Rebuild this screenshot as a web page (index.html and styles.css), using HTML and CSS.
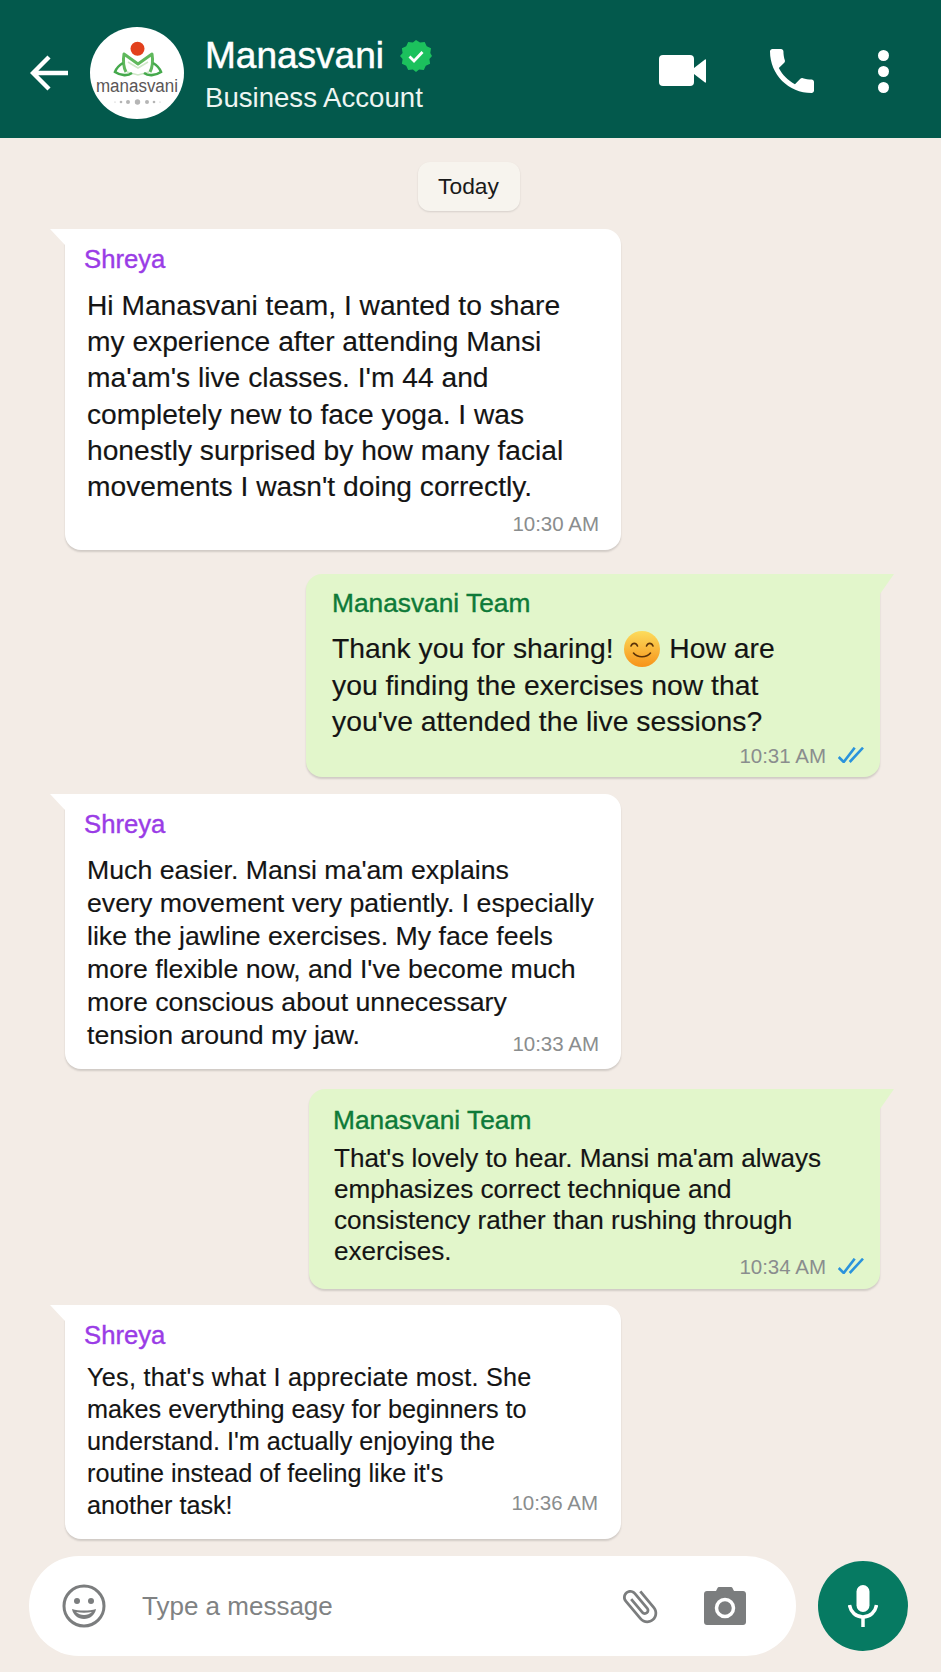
FILE: index.html
```html
<!DOCTYPE html>
<html lang="en">
<head>
    <meta charset="UTF-8">
    <title>Manasvani</title>
    <link rel="stylesheet" href="styles.css">
</head>
<body>
<div class="phone">
    <header class="topbar">
        <svg class="back_icon" viewBox="0 0 40 38"><path d="M38 19H4M19 3L3 19l16 16" fill="none" stroke="#fff" stroke-width="4.4"/></svg>
        <svg class="avatar" viewBox="0 0 94 92">
            <ellipse cx="47" cy="46" rx="47" ry="46" fill="#fff"/>
            <circle cx="47.500" cy="21.700" r="7" fill="#e2401c"/>
            <path d="M37 45l11 3 11-3M38 35l10 6 10-6" fill="none" stroke="#cfe8c8" stroke-width="1.600"/>
            <path d="M36 45c-3-6-3-12-2-18l14 10 14-10c1 6 1 12-2 18" fill="none" stroke="#5fb85c" stroke-width="3" stroke-linejoin="round"/>
            <path d="M33 36c-5 3-7 6-8 9 6 4 13 4 17 1M63 36c5 3 7 6 8 9-6 4-13 4-17 1" fill="none" stroke="#45a94c" stroke-width="2.600"/>
            <text x="47" y="65" class="avatar_text" text-anchor="middle" textLength="82" lengthAdjust="spacingAndGlyphs">manasvani</text>
            <g fill="#b5b5b5"><circle cx="47.500" cy="75" r="2.700"/><circle cx="38" cy="75" r="2"/><circle cx="57" cy="75" r="2"/><circle cx="31" cy="75" r="1.300"/><circle cx="64" cy="75" r="1.300"/><circle cx="25" cy="75" r=".6"/><circle cx="70" cy="75" r=".6"/></g>
        </svg>
        <div class="contact">
            <div class="contact_name">Manasvani
                <svg class="verified" viewBox="0 0 34 34"><path d="M17 1l4 2.600 4.700-.7 2 4.300 4.300 2-.7 4.700L33 17l-2.600 3.100.7 4.700-4.300 2-2 4.300-4.700-.7L17 33l-3.100-2.600-4.700.7-2-4.300-4.300-2 .7-4.700L1 17l2.600-3.100-.7-4.700 4.300-2 2-4.300 4.700.7z" fill="#1cc15d"/><path d="M10.500 17.500l4.500 4.500 8.500-9" fill="none" stroke="#fff" stroke-width="2.800"/></svg>
            </div>
            <div class="contact_sub">Business Account</div>
        </div>
        <div class="top_actions">
            <svg class="video_icon" viewBox="0 0 47 32"><rect x="0" y="0" width="35" height="31" rx="4" fill="#fff"/><path d="M35 13L46 4.500c.5-.4 1 0 1 .6v21.800c0 .6-.5 1-1 .6L35 19z" fill="#fff"/></svg>
            <svg class="call_icon" viewBox="3 3 18 18"><path d="M6.620 10.790c1.440 2.830 3.760 5.140 6.590 6.590l2.200-2.200c.27-.27.67-.36 1.020-.24 1.120.37 2.330.57 3.570.57.550 0 1 .45 1 1V20c0 .55-.45 1-1 1-9.390 0-17-7.610-17-17 0-.55.45-1 1-1h3.500c.55 0 1 .45 1 1 0 1.250.2 2.450.57 3.570.11.350.03.740-.25 1.020l-2.200 2.200z" fill="#fff"/></svg>
            <div class="dots"><span></span><span></span><span></span></div>
        </div>
    </header>

    <main class="chat">
        <div class="day_row"><span class="day_label">Today</span></div>

        <div class="msg msg_in msg_first">
            <div class="sender sender_in">Shreya</div>
            <div class="text text_lg">Hi Manasvani team, I wanted to share<br>my experience after attending Mansi<br>ma'am's live classes. I'm 44 and<br>completely new to face yoga. I was<br>honestly surprised by how many facial<br>movements I wasn't doing correctly.</div>
            <div class="meta meta_first"><span class="time">10:30 AM</span></div>
        </div>

        <div class="msg msg_out msg_second">
            <div class="sender sender_out">Manasvani Team</div>
            <div class="text text_lg">Thank you for sharing!
                <svg class="emoji" viewBox="0 0 36 36">
                    <defs><linearGradient id="smile" x1="0" y1="0" x2="0" y2="1"><stop offset="0" stop-color="#fcdc5c"/><stop offset="1" stop-color="#f7931a"/></linearGradient></defs>
                    <circle cx="18" cy="18" r="18" fill="url(#smile)"/>
                    <path d="M7 15c1.500-3.500 5-3.500 6.500 0M22.500 15c1.500-3.500 5-3.500 6.500 0M9.500 22c4 5 13 5 17 0" fill="none" stroke="#5a3208" stroke-width="1.600" stroke-linecap="round"/>
                </svg>
                How are<br>you finding the exercises now that<br>you've attended the live sessions?</div>
            <div class="meta meta_second"><span class="time">10:31 AM</span>
                <svg class="ticks" viewBox="0 0 26 16"><path d="M.7 10l5 5L16.700.7M11.700 15L25 .7" fill="none" stroke="#2a93dc" stroke-width="2.600"/></svg>
            </div>
        </div>

        <div class="msg msg_in msg_third">
            <div class="sender sender_in">Shreya</div>
            <div class="text text_md">Much easier. Mansi ma'am explains<br>every movement very patiently. I especially<br>like the jawline exercises. My face feels<br>more flexible now, and I've become much<br>more conscious about unnecessary<br>tension around my jaw.</div>
            <div class="meta meta_third"><span class="time">10:33 AM</span></div>
        </div>

        <div class="msg msg_out msg_fourth">
            <div class="sender sender_out">Manasvani Team</div>
            <div class="text text_sm">That's lovely to hear. Mansi ma'am always<br>emphasizes correct technique and<br>consistency rather than rushing through<br>exercises.</div>
            <div class="meta meta_fourth"><span class="time">10:34 AM</span>
                <svg class="ticks" viewBox="0 0 26 16"><path d="M.7 10l5 5L16.700.7M11.700 15L25 .7" fill="none" stroke="#2a93dc" stroke-width="2.600"/></svg>
            </div>
        </div>

        <div class="msg msg_in msg_fifth">
            <div class="sender sender_in">Shreya</div>
            <div class="text text_xs"><span class="line_wide">Yes, that's what I appreciate most. She</span><br>makes everything easy for beginners to<br>understand. I'm actually enjoying the<br>routine instead of feeling like it's<br>another task!</div>
            <div class="meta meta_fifth"><span class="time">10:36 AM</span></div>
        </div>
    </main>

    <footer class="composer">
        <div class="input_box">
            <svg class="smiley" viewBox="0 0 44 44"><circle cx="22" cy="22" r="20" fill="none" stroke="#7b7d7e" stroke-width="3"/><circle cx="15" cy="17" r="3" fill="#7b7d7e"/><circle cx="29" cy="17" r="3" fill="#7b7d7e"/><path d="M10 25c7 2 17 2 24 0-1 6-6 10-12 10s-11-4-12-10z" fill="#7b7d7e"/><path d="M14 28c5 1 11 1 16 0-2 2-5 3-8 3s-6-1-8-3z" fill="#fff"/></svg>
            <span class="placeholder">Type a message</span>
            <svg class="clip" viewBox="0 0 24 24"><path d="M16.500 6v11.500c0 2.210-1.790 4-4 4s-4-1.790-4-4V5c0-1.380 1.120-2.500 2.500-2.500s2.500 1.120 2.500 2.500v10.500c0 .55-.45 1-1 1s-1-.45-1-1V6H10v9.500c0 1.380 1.120 2.500 2.500 2.500s2.500-1.120 2.500-2.500V5c0-2.210-1.790-4-4-4S7 2.790 7 5v12.500c0 3.040 2.460 5.500 5.500 5.500s5.500-2.460 5.500-5.500V6h-1.500z" fill="#7b7d7e" transform="rotate(-40 12 12)"/></svg>
            <svg class="camera" viewBox="0 0 42 38"><path d="M3 4h9l1.500-3c.3-.6.8-1 1.500-1h12c.7 0 1.200.4 1.500 1L30 4h9c1.700 0 3 1.300 3 3v28c0 1.700-1.300 3-3 3H3c-1.700 0-3-1.300-3-3V7c0-1.700 1.300-3 3-3z" fill="#7b7d7e"/><circle cx="21" cy="21" r="8.500" fill="none" stroke="#fff" stroke-width="3.500"/></svg>
        </div>
        <div class="mic_btn">
            <svg class="mic" viewBox="0 0 30 42"><rect x="8.500" y="0" width="13" height="27" rx="6.500" fill="#fff"/><path d="M1.500 20c1 7 6.500 12 13.500 12s12.500-5 13.500-12" fill="none" stroke="#fff" stroke-width="3.500"/><path d="M15 31v11" stroke="#fff" stroke-width="3.500"/></svg>
        </div>
    </footer>
</div>
</body>
</html>
```

FILE: styles.css
```css
body{
    margin: 0;
    background: #f3ece6;
    font-family: "Liberation Sans", Arial, sans-serif;
}
.phone{
    width: 941px;
    height: 1672px;
    overflow: hidden;
    display: flex;
    flex-direction: column;
    background: #f3ece6;
}

/* top bar */
.topbar{
    height: 138px;
    flex: none;
    background: #03594c;
    display: flex;
    align-items: center;
    padding-left: 30px;
    color: #fff;
}
.back_icon{
    width: 40px;
    height: 38px;
    margin-top: 7px;
}
.avatar{
    width: 94px;
    height: 92px;
    margin-left: 20px;
    margin-top: 8px;
}
.avatar_text{
    font-size: 18px;
    fill: #5b5657;
    font-family: "Liberation Sans", Arial, sans-serif;
}
.contact{
    margin-left: 21px;
    margin-top: 10px;
}
.contact_name{
    font-size: 37px;
    line-height: 44px;
    -webkit-text-stroke: .5px #fff;
    display: flex;
    align-items: center;
    gap: 15px;
}
.verified{
    width: 34px;
    height: 34px;
}
.contact_sub{
    font-size: 27.600px;
    line-height: 32px;
    margin-top: 4px;
    color: #eef5f2;
}
.top_actions{
    margin-left: auto;
    display: flex;
    align-items: center;
    padding-right: 52px;
    margin-top: 4px;
}
.video_icon{
    width: 47px;
    height: 32px;
}
.call_icon{
    width: 44px;
    height: 44px;
    margin-left: 64px;
}
.dots{
    display: flex;
    flex-direction: column;
    gap: 5px;
    margin-left: 64px;
}
.dots span{
    width: 11px;
    height: 11px;
    border-radius: 50%;
    background: #fff;
}

/* chat */
.chat{
    flex: 1;
    display: flex;
    flex-direction: column;
}
.day_row{
    display: flex;
    justify-content: center;
    margin-top: 24px;
    padding-right: 4px;
}
.day_label{
    width: 102px;
    height: 49px;
    line-height: 49px;
    text-align: center;
    font-size: 22.800px;
    color: #1a1a1a;
    background: #f7f4ee;
    border-radius: 12px;
    box-shadow: 0 1px 2px rgba(0,0,0,.12);
}
.msg{
    position: relative;
    box-sizing: border-box;
    border-radius: 0 16px 16px 16px;
    box-shadow: 0 2px 2px rgba(0,0,0,.14);
}
.msg_in{
    width: 556px;
    margin-left: 65px;
    background: #fff;
    padding-left: 19px;
}
.msg_out{
    background: #e2f6cb;
    border-radius: 16px 0 16px 16px;
    margin-left: auto;
    margin-right: 61px;
}
.msg_in::before{
    content: "";
    position: absolute;
    left: -15px;
    top: 0;
    border-top: 16px solid #fff;
    border-left: 15px solid transparent;
}
.msg_out::after{
    content: "";
    position: absolute;
    right: -14px;
    top: 0;
    border-top: 20px solid #e2f6cb;
    border-right: 14px solid transparent;
}
.msg_first{ margin-top: 18px; height: 321px; }
.msg_second{ margin-top: 24px; width: 574px; height: 203px; padding-left: 26px; }
.msg_third{ margin-top: 17px; height: 275px; }
.msg_fourth{ margin-top: 20px; width: 571px; height: 200px; padding-left: 24px; }
.msg_fifth{ margin-top: 16px; height: 234px; }

.sender{
    font-size: 26px;
    line-height: 30px;
    padding-top: 15px;
    -webkit-text-stroke: .4px;
}
.msg_in .sender{ font-size: 25.700px; }
.msg_out .sender{ font-size: 26.300px; }
.msg_second .sender{ padding-top: 14px; }
.msg_fourth .sender{ padding-top: 16px; }
.sender_in{ color: #9a3ce6; }
.sender_out{ color: #0e7a38; }
.text{
    color: #141414;
    padding-left: 3px;
    -webkit-text-stroke: .15px;
}
.msg_out .text{ padding-left: 0; }
.text_lg{ font-size: 28.200px; line-height: 36.200px; margin-top: 13px; }
.msg_second .text_lg{ font-size: 28.300px; margin-top: 12px; }
.text_md{ font-size: 26.700px; line-height: 33.100px; margin-top: 15px; }
.text_sm{ font-size: 26.100px; line-height: 31px; margin-top: 8px; }
.msg_fourth .text_sm{ padding-left: 1px; }
.text_xs{ font-size: 25.200px; line-height: 32px; margin-top: 11px; }
.line_wide{ letter-spacing: .28px; }
.emoji{
    width: 36px;
    height: 36px;
    vertical-align: -9px;
    margin: 0 1px 0 3px;
}

.meta{
    display: flex;
    justify-content: flex-end;
    align-items: center;
    gap: 12px;
    padding-right: 22px;
    height: 26px;
}
.msg_out .meta{ padding-right: 16px; }
.time{
    font-size: 20.500px;
    color: #8a8d8e;
}
.ticks{
    width: 26px;
    height: 16px;
    margin-top: -3px;
}
.meta_first{ margin-top: 7px; }
.meta_second{ margin-top: 4px; }
.meta_third{ margin-top: -22px; }
.meta_fourth{ margin-top: -13px; }
.msg_in .meta_fifth{ margin-top: -31px; padding-right: 23px; }

/* bottom input */
.composer{
    flex: none;
    display: flex;
    align-items: center;
    height: 116px;
    padding-left: 29px;
    padding-bottom: 16px;
    box-sizing: border-box;
}
.input_box{
    width: 767px;
    height: 100px;
    border-radius: 50px;
    background: #fff;
    display: flex;
    align-items: center;
    padding: 0 50px 0 33px;
    box-sizing: border-box;
}
.smiley{
    width: 44px;
    height: 44px;
}
.placeholder{
    font-size: 26px;
    color: #808283;
    margin-left: 36px;
}
.clip{
    width: 44px;
    height: 44px;
    margin-left: auto;
}
.camera{
    width: 42px;
    height: 38px;
    margin-left: 42px;
}
.mic_btn{
    width: 90px;
    height: 90px;
    border-radius: 50%;
    background: #067a62;
    margin-left: 22px;
    display: flex;
    align-items: center;
    justify-content: center;
}
.mic{
    width: 30px;
    height: 42px;
}
```
